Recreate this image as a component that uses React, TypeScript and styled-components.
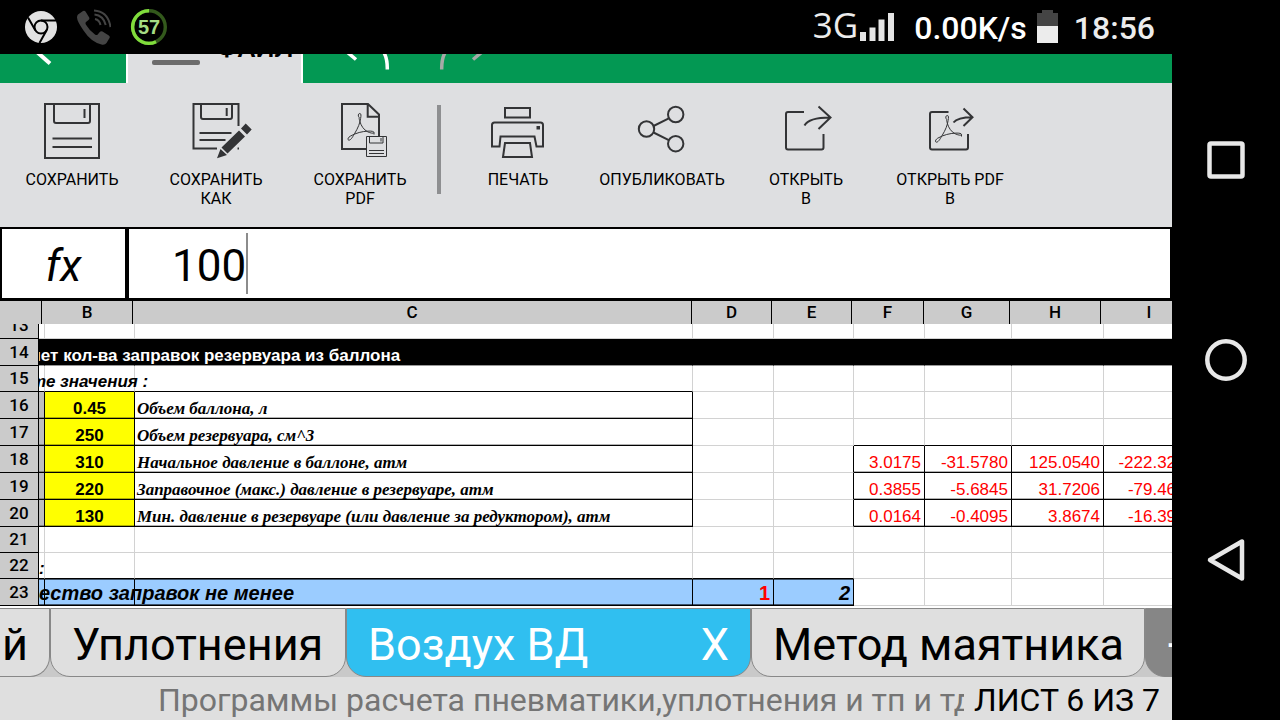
import React, { useState } from 'react';
import styled, { createGlobalStyle, css } from 'styled-components';

const GlobalStyle = createGlobalStyle`
  *, *::before, *::after { box-sizing: border-box; }
  body { margin: 0; background: #000; font-family: Roboto, "Liberation Sans", sans-serif; }
  button, input { font: inherit; color: inherit; margin: 0; padding: 0; border: 0; background: none; border-radius: 0; }
  button { cursor: pointer; }
`;

const ink = '#333436';

const Device = styled.div`
  display: flex;
  min-height: 100vh;
  background: #000;
`;

const Screen = styled.div`
  flex: 1;
  min-width: 0;
  display: flex;
  flex-direction: column;
`;

/* System status bar */

const StatusBar = styled.header`
  display: flex;
  justify-content: space-between;
  align-items: center;
  height: 54px;
  padding: 0 17px 0 24px;
  color: #ececec;
`;

const StatusGroup = styled.div`
  display: flex;
  align-items: center;
  height: 54px;
`;

const Notifications = styled(StatusGroup)`
  gap: 19px;
`;

const NetworkLabel = styled.span`
  font: 35px/50px "Open Sans", "Noto Sans", sans-serif;
  margin-right: 2px;
  padding-bottom: 4px;
`;

const StatusText = styled.span<{ $bright?: boolean }>`
  font-size: 32px;
  font-weight: 500;
  line-height: 54px;
  padding-top: 2px;
  color: ${(p) => (p.$bright ? '#fff' : '#ececec')};
`;

const SignalIcon = styled.svg`
  margin-right: 19px;
`;

const BatteryIcon = styled.svg`
  margin: 0 16px 0 10px;
`;

/* Ribbon */

const Ribbon = styled.nav`
  display: flex;
  align-items: flex-end;
  height: 29px;
  overflow: hidden;
  background: #039853;
`;

const RibbonButton = styled.button<{ $width: number }>`
  flex: none;
  width: ${(p) => p.$width}px;
  height: 29px;

  svg { display: block; }
`;

const RibbonTab = styled.button`
  flex: none;
  display: flex;
  align-items: flex-end;
  justify-content: flex-start;
  gap: 16px;
  width: 177px;
  height: 60px;
  padding: 0 8px 18px 24px;
  border: solid #fff;
  border-width: 0 2px;
  background: #dedfe1;
  font-size: 27px;
  font-weight: 500;
  line-height: 34px;
`;

const MenuBar = styled.span`
  flex: none;
  width: 48px;
  height: 5px;
  border-radius: 2px;
  background: #6c6c6c;
`;

const Toolbar = styled.div`
  display: flex;
  align-items: flex-start;
  height: 144px;
  padding-top: 12px;
  background: #dedfe1;
`;

const ToolButton = styled.button`
  flex: none;
  display: flex;
  flex-direction: column;
  align-items: center;
  gap: 3px;
  width: 144px;
  font-size: 16px;
  line-height: 19px;
  color: #000;
`;

const ToolLabel = styled.span<{ $width: number }>`
  width: ${(p) => p.$width}px;
  text-align: center;
`;

const Divider = styled.span`
  flex: none;
  width: 4px;
  height: 89px;
  margin: 10px 5px 0;
  background: #8e8f91;
`;

/* Formula bar */

const FormulaBar = styled.div`
  display: flex;
  gap: 4px;
  height: 74px;
  padding: 2px 2px 3px;
  background: #000;
`;

const FormulaButton = styled.button`
  width: 123px;
  background: #fff;
  font-size: 44px;
  font-style: italic;
  line-height: 69px;
  padding-top: 3px;
`;

const FormulaField = styled.label`
  flex: 1;
  display: flex;
  align-items: center;
  padding-left: 43px;
  background: #fff;
  font-size: 44px;
`;

const FormulaInput = styled.input`
  height: 69px;
  line-height: 69px;
  padding-top: 6px;
  outline: none;
  caret-color: transparent;
`;

const Caret = styled.span`
  width: 2px;
  height: 61px;
  background: #8c8c8c;
`;

/* Sheet */

const SheetPane = styled.main`
  flex: 1;
  display: flex;
  overflow: hidden;
  background: #fff;
`;

const SheetTable = styled.table`
  flex: 1;
  min-width: 0;
  display: flex;
  flex-direction: column;
`;

const SheetHead = styled.thead`
  display: block;
  background: #cbcbcb;
`;

const HeadRow = styled.tr`
  display: grid;
  grid-template-columns: 39px 3px 91px 559px 80px 80px 72px 86px 91px minmax(97px, 1fr);
`;

const ColumnHead = styled.th`
  height: 23px;
  padding: 0;
  border-right: 1px solid #000;
  font-size: 17px;
  font-weight: 500;
  line-height: 23px;
  text-align: center;
`;

const Corner = styled.td`
  padding: 0;
`;

const SheetBody = styled.tbody`
  display: block;
`;

const SheetRow = styled.tr<{ $height: number }>`
  display: grid;
  grid-template-columns: 39px 6px 90px 558px 81px 80px 71px 87px 92px minmax(95px, 1fr);
  height: ${(p) => p.$height}px;
`;

const RowHead = styled.th`
  position: relative;
  z-index: 2;
  display: flex;
  align-items: flex-end;
  justify-content: center;
  overflow: hidden;
  padding: 0;
  border: solid #000;
  border-width: 0 1px 1px 0;
  background: #cbcbcb;
  font-size: 17px;
  font-weight: 500;
  line-height: 26px;
`;

type Look = 'plain' | 'title' | 'band' | 'stub' | 'input' | 'caption' | 'coef';

const ruledEdge = css`
  border-color: #000;
  box-shadow: inset 0 -1px rgba(0, 0, 0, 0.3);
`;

const looks: Record<Look, ReturnType<typeof css> | null> = {
  plain: null,
  title: css`
    background: #000;
    border-right-color: #000;
    border-bottom-color: #999;
    color: #fff;
    font-weight: 700;
  `,
  band: css`
    background: #9bccff;
    border-color: #000;
    box-shadow: inset 0 1px #3f536a, inset 0 -1px #3f536a;
    font-size: 20px;
    font-style: italic;
    font-weight: 700;
    line-height: 24px;
  `,
  stub: css`
    background: #bdbdbd;
    ${ruledEdge}
  `,
  input: css`
    justify-content: center;
    background: #ff0;
    font-weight: 700;
    ${ruledEdge}
  `,
  caption: css`
    padding-left: 2px;
    font-family: "Liberation Serif", serif;
    font-style: italic;
    font-weight: 700;
    ${ruledEdge}
  `,
  coef: css`
    justify-content: flex-end;
    color: #f00;
    ${ruledEdge}
  `,
};

const Cell = styled.td<{ $look: Look; $ruled?: boolean; $edge?: boolean; $end?: boolean; $alert?: boolean; $narrow?: boolean }>`
  position: relative;
  display: flex;
  align-items: flex-end;
  min-width: 0;
  padding: 0 ${(p) => (p.$narrow ? 0 : 3)}px;
  border: solid #d2d2d2;
  border-width: 0 1px 1px 0;
  font: 17px/18px "Liberation Sans", sans-serif;
  white-space: nowrap;
  ${(p) => looks[p.$look]}
  ${(p) => p.$ruled && css`border-bottom-color: #000;`}
  ${(p) => p.$edge && css`border-right-color: #000;`}
  ${(p) => p.$end && css`justify-content: flex-end;`}
  ${(p) => p.$alert && css`color: #f00; font-style: normal;`}
`;

/* Long text of a narrow column lies over the cells to its right. */
const Spill = styled.span<{ $left: number; $title: boolean }>`
  position: absolute;
  z-index: 1;
  bottom: 0;
  left: ${(p) => p.$left}px;
  font-weight: 700;
  font-style: ${(p) => (p.$title ? 'normal' : 'italic')};
`;

/* Sheet tabs */

const TabStrip = styled.nav`
  display: flex;
  height: 69px;
  overflow: hidden;
  background: #c9c9c9;
`;

const Tab = styled.div<{ $width: number; $tone?: 'active' | 'add'; $cut?: boolean }>`
  flex: none;
  display: flex;
  align-items: center;
  justify-content: ${(p) => (p.$cut ? 'flex-end' : 'space-between')};
  width: ${(p) => p.$width}px;
  padding: 4px 21px 0;
  border: 1px solid #888;
  border-left-width: ${(p) => (p.$cut ? 0 : 1)}px;
  border-radius: 0 0 20px ${(p) => (p.$cut ? 0 : 20)}px;
  background: #dfdfdf;
  color: #000;
  font-size: 45px;
  line-height: 60px;
  white-space: nowrap;
  ${(p) => p.$tone === 'active' && css`background: #30bff0; color: #fff;`}
  ${(p) => p.$tone === 'add' && css`background: #868686; color: #fff;`}
`;

const Footer = styled.footer`
  display: flex;
  height: 43px;
  padding: 0 12px 0 158px;
  background: #dfdfdf;
  font-size: 32px;
  line-height: 46px;
  white-space: nowrap;
`;

const FileName = styled.span`
  flex: 1;
  min-width: 0;
  overflow: hidden;
  color: #757575;
`;

const SheetCount = styled.span`
  padding-left: 10px;
`;

/* System navigation */

const SystemNav = styled.nav`
  flex: none;
  display: flex;
  flex-direction: column;
  width: 108px;
  height: 100vh;
  padding: 60px 0;
`;

const NavButton = styled.button`
  flex: 1;
  display: flex;
  align-items: center;
  justify-content: center;
`;

/* Icons */

const ToolSvg = ({ children }: { children: React.ReactNode }) => (
  <svg width="72" height="72" viewBox="0 0 72 72" fill="none" stroke={ink} strokeWidth="2" aria-hidden="true">
    {children}
  </svg>
);

const Acrobat = ({ x = 0, y = 0 }: { x?: number; y?: number }) => (
  <path
    transform={`translate(${x} ${y})`}
    strokeWidth="1"
    d="M35.2 22.5c-1.6-1.6-1-4 .6-4 1.5 0 1.3 2 .8 5-.6 4.500-2.600 9.500-5.800 14.700-1.800 3-3.600 6.800-5.800 7-1.800-.2-1.200-2.500 1.200-4 6-3.400 12-4.800 18-5.100 4-.2 6 .6 5.800 1.400-.4 1.300-3.600.6-6.500-.8-3.800-1.900-6.300-6-7.500-9.800-.6-2-1-3.400-.8-4.400M50 37.500v2"
  />
);

const SaveIcon = () => (
  <ToolSvg>
    <rect x="9" y="9" width="54" height="54" />
    <path d="M18 9v17q0 2 2 2h32q2 0 2-2V9M48.500 14v9M16.500 43.500h39.500M16.500 52h39.500" />
  </ToolSvg>
);

const SaveAsIcon = () => (
  <ToolSvg>
    <path d="M58.500 31V9H13.500v44.500H37M21 9v13q0 2 2 2h27q2 0 2-2V9M46.700 13v8M19.500 38H51.500M19.500 45H45.500M57.500 53.500h1.500" />
    <path fill={ink} stroke="none" d="M65.700 28.500l6 6-4.700 5-6-6zM59 35.500l6 6-17.500 17-6-6zM40.500 54l6.500 6-10 3.200z" />
  </ToolSvg>
);

const SavePdfIcon = () => (
  <ToolSvg>
    <path d="M55 41V19.500L44 9H18v45h24M43.700 9v12.700H55" />
    <Acrobat />
    <path strokeWidth="1" d="M42.500 41.500h20v20h-20zM45.500 41.500v6.500h13.500v-6.500M57 43v3.500M45 55.500h15M45 58.500h15" />
  </ToolSvg>
);

const PrintIcon = () => (
  <ToolSvg>
    <path d="M23 13h25v9.500H23zM17.500 51.500H10V30q0-2.500 2.500-2.500H58.500q2.500 0 2.500 2.500V51.500H54.500L52.500 41.500H18.500zM23 48h25l2 14H21z" />
    <path fill={ink} stroke="none" d="M54.500 31h3.500v3.500h-3.500z" />
  </ToolSvg>
);

const ShareIcon = () => (
  <ToolSvg>
    <circle cx="49.700" cy="19.500" r="7.700" />
    <circle cx="20.500" cy="34" r="7.700" />
    <circle cx="49.700" cy="48.700" r="7.700" />
    <path d="M27.500 31l15.300-7.600M27.500 37.500l15.300 7.600" />
  </ToolSvg>
);

const OpenInIcon = () => (
  <ToolSvg>
    <path d="M34 17H18q-2 0-2 2V52.500q0 2 2 2H51.500q2 0 2-2V39M34.500 30.500c3-5.500 10-8 25.500-8M48.500 11.500L60.500 22.500 48.500 34" />
  </ToolSvg>
);

const OpenPdfInIcon = () => (
  <ToolSvg>
    <path d="M34.500 17H18q-2 0-2 2V52.500q0 2 2 2H52q2 0 2-2V39M39.500 27.500c3-4 8-5.300 19-5.300M49.500 13.500L58.500 22.200 49.500 31" />
    <Acrobat x={-2.5} y={2} />
  </ToolSvg>
);

const fileTools = [
  { text: 'СОХРАНИТЬ', width: 110, Icon: SaveIcon },
  { text: 'СОХРАНИТЬ КАК', width: 110, Icon: SaveAsIcon },
  { text: 'СОХРАНИТЬ PDF', width: 110, Icon: SavePdfIcon },
];

const shareTools = [
  { text: 'ПЕЧАТЬ', width: 110, Icon: PrintIcon },
  { text: 'ОПУБЛИКОВАТЬ', width: 140, Icon: ShareIcon },
  { text: 'ОТКРЫТЬ В', width: 80, Icon: OpenInIcon },
  { text: 'ОТКРЫТЬ PDF В', width: 110, Icon: OpenPdfInIcon },
];

const columns = ['B', 'C', 'D', 'E', 'F', 'G', 'H', 'I'];

type Row = {
  n: number;
  height: number;
  kind: 'empty' | 'title' | 'note' | 'data' | 'result';
  ruled?: boolean;
  spill?: { text: string; left: number };
  value?: string;
  caption?: string;
  coef?: string[];
  coefTop?: boolean;
};

const rows: Row[] = [
  { n: 13, height: 15, kind: 'empty' },
  { n: 14, height: 27, kind: 'title', spill: { text: 'чет кол-ва заправок резервуара из баллона', left: -8 } },
  { n: 15, height: 26, kind: 'note', ruled: true, spill: { text: 'те значения :', left: -8 } },
  { n: 16, height: 27, kind: 'data', value: '0.45', caption: 'Объем баллона, л' },
  { n: 17, height: 27, kind: 'data', value: '250', caption: 'Объем резервуара, см^3', coefTop: true },
  { n: 18, height: 27, kind: 'data', value: '310', caption: 'Начальное давление в баллоне, атм', coef: ['3.0175', '-31.5780', '125.0540', '-222.3260'] },
  { n: 19, height: 27, kind: 'data', value: '220', caption: 'Заправочное (макс.) давление в резервуаре, атм', coef: ['0.3855', '-5.6845', '31.7206', '-79.4650'] },
  { n: 20, height: 27, kind: 'data', value: '130', caption: 'Мин. давление в резервуаре (или давление за редуктором), атм', coef: ['0.0164', '-0.4095', '3.8674', '-16.3950'] },
  { n: 21, height: 26, kind: 'empty' },
  { n: 22, height: 26, kind: 'note', spill: { text: ':', left: 0 } },
  { n: 23, height: 27, kind: 'result', spill: { text: 'ество заправок не менее', left: 0 } },
];

const lookOf = (row: Row, column: number): Look => {
  if (row.kind === 'title') return 'title';
  if (row.kind === 'result' && column <= 4) return 'band';
  if (row.kind === 'data') {
    if (column === 0) return 'stub';
    if (column === 1) return 'input';
    if (column === 2) return 'caption';
    if (column >= 5 && row.coef) return 'coef';
  }
  return 'plain';
};

const textOf = (row: Row, column: number) => {
  if (row.kind === 'data') {
    if (column === 1) return row.value;
    if (column === 2) return row.caption;
    if (column >= 5) return row.coef?.[column - 5];
  }
  if (row.kind === 'result' && column === 3) return '1';
  if (row.kind === 'result' && column === 4) return '2';
  return undefined;
};

const Sheet = () => (
  <SheetPane>
    <SheetTable>
      <SheetHead>
        <HeadRow>
          <Corner />
          <ColumnHead aria-label="A" />
          {columns.map((name) => (
            <ColumnHead key={name} scope="col">{name}</ColumnHead>
          ))}
        </HeadRow>
      </SheetHead>
      <SheetBody>
        {rows.map((row) => (
          <SheetRow key={row.n} $height={row.height}>
            <RowHead scope="row">{row.n}</RowHead>
            {Array.from({ length: 9 }, (_, c) => (
              <Cell
                key={c}
                $look={lookOf(row, c)}
                $narrow={c === 0}
                $ruled={(row.ruled && c <= 2) || (row.coefTop && c >= 5) || (row.n === 22 && c <= 4)}
                $edge={!!row.coef && c === 4}
                $end={row.kind === 'result' && c >= 3}
                $alert={row.kind === 'result' && c === 3}
              >
                {c === 0 && row.spill ? (
                  <Spill $left={row.spill.left} $title={row.kind === 'title'}>{row.spill.text}</Spill>
                ) : (
                  textOf(row, c)
                )}
              </Cell>
            ))}
          </SheetRow>
        ))}
      </SheetBody>
    </SheetTable>
  </SheetPane>
);

export default function App() {
  const [value, setValue] = useState('100');

  return (
    <Device>
      <GlobalStyle />
      <Screen>
        <StatusBar>
          <Notifications>
            <svg width="34" height="34" viewBox="0 0 34 34" aria-hidden="true">
              <circle cx="17" cy="17" r="16" fill="#e2e2e2" />
              <g fill="none" stroke="#000" strokeWidth="2">
                <circle cx="17" cy="17" r="6.500" />
                <path d="M17 10.500H32M11.300 20.200L4 7.500M22.600 20.200L15.500 33" />
              </g>
            </svg>
            <svg width="34" height="36" viewBox="0 0 34 36" aria-hidden="true">
              <path fill="#444" d="M1 5.500L6 2q1.500-.8 2.500.5l3.700 6q.6 1.500-.7 2.500l-2.500 2q-1 1 0 2.700 3.500 6 9 9.800 1.700 1.200 2.700 0l2.300-2.700q1-1 2.500-.2l6.300 3.900q1.500 1 .7 2.500l-3 5q-1.500 2.200-5 1.500Q14 33 6.500 21.500 0 12 0 8.500 0 6.500 1 5.500z" />
              <path fill="none" stroke="#444" strokeWidth="2" d="M18 10q4.500 1 5.500 6M17.500 5.500q9 1 11.200 10.500M17 1.500q14 .8 16.500 16.500" />
            </svg>
            <svg width="38" height="38" viewBox="0 0 38 38" aria-label="57">
              <circle cx="19" cy="19" r="16.300" fill="none" stroke="#33591c" strokeWidth="3.400" />
              <path d="M19 2.700A16.300 16.300 0 1 0 26 33.700" fill="none" stroke="#80dc3c" strokeWidth="3.400" />
              <text x="19" y="26" textAnchor="middle" fontFamily="Liberation Sans, sans-serif" fontWeight="700" fontSize="20" fill="#a5dc83">57</text>
            </svg>
          </Notifications>
          <StatusGroup>
            <NetworkLabel>3G</NetworkLabel>
            <SignalIcon width="35" height="30" viewBox="0 0 35 30" fill="#e4e4e4" aria-hidden="true">
              <path d="M0 20h6v9H0zM9.500 15.500h6V29h-6zM18.500 7.500h6V29h-6zM28 1h6v28h-6z" />
            </SignalIcon>
            <StatusText $bright>0.00K/s</StatusText>
            <BatteryIcon width="21" height="34" viewBox="0 0 21 34" aria-hidden="true">
              <path fill="#444" d="M0 3h5V0h11v3h5v14H0z" />
              <path fill="#ececec" d="M0 16h21v17H0z" />
            </BatteryIcon>
            <StatusText>18:56</StatusText>
          </StatusGroup>
        </StatusBar>

        <Ribbon>
          <RibbonButton $width={126} aria-label="Назад">
            <svg width="126" height="29" viewBox="0 0 126 29" fill="none" stroke="#fff" strokeWidth="4">
              <path d="M37-2L50 9.500" />
            </svg>
          </RibbonButton>
          <RibbonTab>
            <MenuBar />
            ФАЙЛ
          </RibbonTab>
          <RibbonButton $width={112} aria-label="Отменить">
            <svg width="112" height="29" viewBox="0 0 112 29" fill="none" stroke="#fff" strokeWidth="3.500">
              <path d="M44-2L53 5.500M79-4Q84.500 2 84.300 15.500" />
            </svg>
          </RibbonButton>
          <RibbonButton $width={112} aria-label="Повторить">
            <svg width="112" height="29" viewBox="0 0 112 29" fill="none" stroke="#a6aaa7" strokeWidth="3.500">
              <path d="M67-2L58 5.500M32-4Q26.500 2 26.700 15.500" />
            </svg>
          </RibbonButton>
        </Ribbon>

        <Toolbar>
          {fileTools.map(({ text, width, Icon }) => (
            <ToolButton key={text}>
              <Icon />
              <ToolLabel $width={width}>{text}</ToolLabel>
            </ToolButton>
          ))}
          <Divider />
          {shareTools.map(({ text, width, Icon }) => (
            <ToolButton key={text}>
              <Icon />
              <ToolLabel $width={width}>{text}</ToolLabel>
            </ToolButton>
          ))}
        </Toolbar>

        <FormulaBar>
          <FormulaButton>fx</FormulaButton>
          <FormulaField>
            <FormulaInput
              aria-label="Формула"
              value={value}
              onChange={(e) => setValue(e.target.value)}
              style={{ width: `${value.length}ch` }}
            />
            <Caret />
          </FormulaField>
        </FormulaBar>

        <Sheet />

        <TabStrip>
          <Tab $width={50} $cut><button>й</button></Tab>
          <Tab $width={296}><button>Уплотнения</button></Tab>
          <Tab $width={405} $tone="active">
            <button>Воздух ВД</button>
            <button aria-label="Закрыть лист">X</button>
          </Tab>
          <Tab $width={394}><button>Метод маятника</button></Tab>
          <Tab $width={72} $tone="add"><button aria-label="Добавить лист">+</button></Tab>
        </TabStrip>

        <Footer>
          <FileName>Программы расчета пневматики,уплотнения и тп и тд</FileName>
          <SheetCount>ЛИСТ 6 ИЗ 7</SheetCount>
        </Footer>
      </Screen>

      <SystemNav>
        <NavButton aria-label="Недавние">
          <svg width="44" height="44" viewBox="0 0 44 44" fill="none" stroke="#e8e8e8" strokeWidth="4.500">
            <rect x="5.500" y="5.500" width="33" height="33" rx="1.500" />
          </svg>
        </NavButton>
        <NavButton aria-label="Домой">
          <svg width="44" height="44" viewBox="0 0 44 44" fill="none" stroke="#e8e8e8" strokeWidth="4.500">
            <circle cx="22" cy="22" r="18.700" />
          </svg>
        </NavButton>
        <NavButton aria-label="Назад">
          <svg width="44" height="44" viewBox="0 0 44 44" fill="none" stroke="#e8e8e8" strokeWidth="4.500" strokeLinejoin="round">
            <path d="M6 22L38 3.500V40.500z" />
          </svg>
        </NavButton>
      </SystemNav>
    </Device>
  );
}
